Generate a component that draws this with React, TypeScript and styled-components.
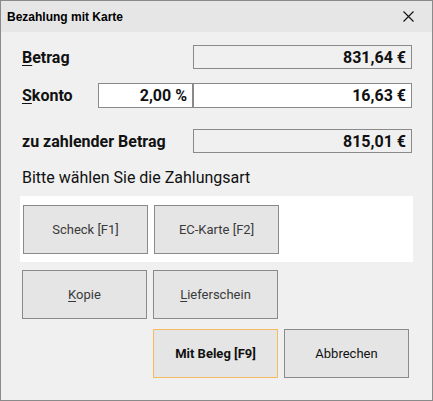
import React from "react";
import styled, { createGlobalStyle } from "styled-components";

const Global = createGlobalStyle`
  html, body { margin: 0; padding: 0; background: #f0f0f0; }
  * { box-sizing: border-box; }
`;

const Window = styled.div`
  width: 433px;
  height: 401px;
  border: 1px solid #8a8a8a;
  background: #f0f0f0;
  display: flex;
  flex-direction: column;
  font-family: Roboto, "Noto Sans", sans-serif;
  color: #111;
`;

const TitleBar = styled.div`
  height: 31px;
  flex: none;
  background: #e6e6e6;
  display: flex;
  align-items: center;
  justify-content: space-between;
  padding: 0 18px 0 6px;
`;

const Title = styled.span`
  font-family: "Liberation Sans", Arial, sans-serif;
  font-weight: bold;
  font-size: 12px;
  color: #000;
`;

const CloseIcon = styled.svg`
  width: 11px;
  height: 11px;
  display: block;
`;

const Content = styled.div`
  padding: 13px 20px 0 21px;
  display: flex;
  flex-direction: column;
`;

const FieldGrid = styled.div`
  display: grid;
  grid-template-columns: 76px 95px 219px;
  grid-template-rows: 24px 14px 25px 21px 24px;
`;

const Label = styled.div<{ $row: number; $span?: boolean }>`
  grid-row: ${(p) => p.$row};
  grid-column: ${(p) => (p.$span ? "1 / 3" : "1")};
  font-weight: 700;
  font-size: 16px;
  display: flex;
  align-items: center;
  white-space: nowrap;
  color: #111;
`;

const Field = styled.div<{ $row: number; $col: number; $white?: boolean }>`
  grid-row: ${(p) => p.$row};
  grid-column: ${(p) => p.$col};
  border: 1px solid #8a8a8a;
  background: ${(p) => (p.$white ? "#ffffff" : "#f0f0f0")};
  font-weight: 700;
  font-size: 16px;
  display: flex;
  align-items: center;
  justify-content: flex-end;
  padding-right: 5px;
  color: #111;
`;

const Prompt = styled.div`
  font-size: 16px;
  line-height: 20px;
  margin-top: 15px;
  color: #111;
`;

const Panel = styled.div`
  background: #ffffff;
  margin: 8px -1px 0 -2px;
  padding: 9px 3px 8px 3px;
  display: flex;
  gap: 6px;
`;

const ButtonGrid = styled.div`
  display: grid;
  grid-template-columns: repeat(3, 125px);
  grid-auto-rows: 49px;
  column-gap: 6px;
  row-gap: 10px;
  margin-top: 8px;
`;

const Button = styled.button<{ $bold?: boolean; $focused?: boolean; $col?: number; $dark?: boolean }>`
  width: 125px;
  height: 49px;
  background: #e5e5e5;
  border: 1px solid ${(p) => (p.$focused ? "#f6bb62" : "#8a8a8a")};
  font-family: Roboto, "Noto Sans", sans-serif;
  font-size: 13px;
  font-weight: ${(p) => (p.$bold ? 700 : 400)};
  color: ${(p) => (p.$bold || p.$dark ? "#111" : "#3a3a3a")};
  padding: 0;
  grid-column: ${(p) => (p.$col ? p.$col : "auto")};
  cursor: default;
`;

const U = styled.span`
  text-decoration: underline;
  text-underline-offset: 2px;
`;

export default function App() {
  return (
    <>
      <Global />
      <Window>
        <TitleBar>
          <Title>Bezahlung mit Karte</Title>
          <CloseIcon viewBox="0 0 11 11">
            <path d="M0.5 0.5 L10.5 10.5 M10.5 0.5 L0.5 10.5" stroke="#111" strokeWidth="1.1" fill="none" />
          </CloseIcon>
        </TitleBar>
        <Content>
          <FieldGrid>
            <Label $row={1}>
              <U>B</U>etrag
            </Label>
            <Field $row={1} $col={3}>831,64 €</Field>
            <Label $row={3}>
              <U>S</U>konto
            </Label>
            <Field $row={3} $col={2} $white>2,00 %</Field>
            <Field $row={3} $col={3} $white>16,63 €</Field>
            <Label $row={5} $span>zu zahlender Betrag</Label>
            <Field $row={5} $col={3}>815,01 €</Field>
          </FieldGrid>
          <Prompt>Bitte wählen Sie die Zahlungsart</Prompt>
          <Panel>
            <Button>Scheck [F1]</Button>
            <Button>EC-Karte [F2]</Button>
          </Panel>
          <ButtonGrid>
            <Button>
              <U>K</U>opie
            </Button>
            <Button>
              <U>L</U>ieferschein
            </Button>
            <Button $col={2} $bold $focused>
              Mit Beleg [F9]
            </Button>
            <Button $col={3} $dark>Abbrechen</Button>
          </ButtonGrid>
        </Content>
      </Window>
    </>
  );
}
